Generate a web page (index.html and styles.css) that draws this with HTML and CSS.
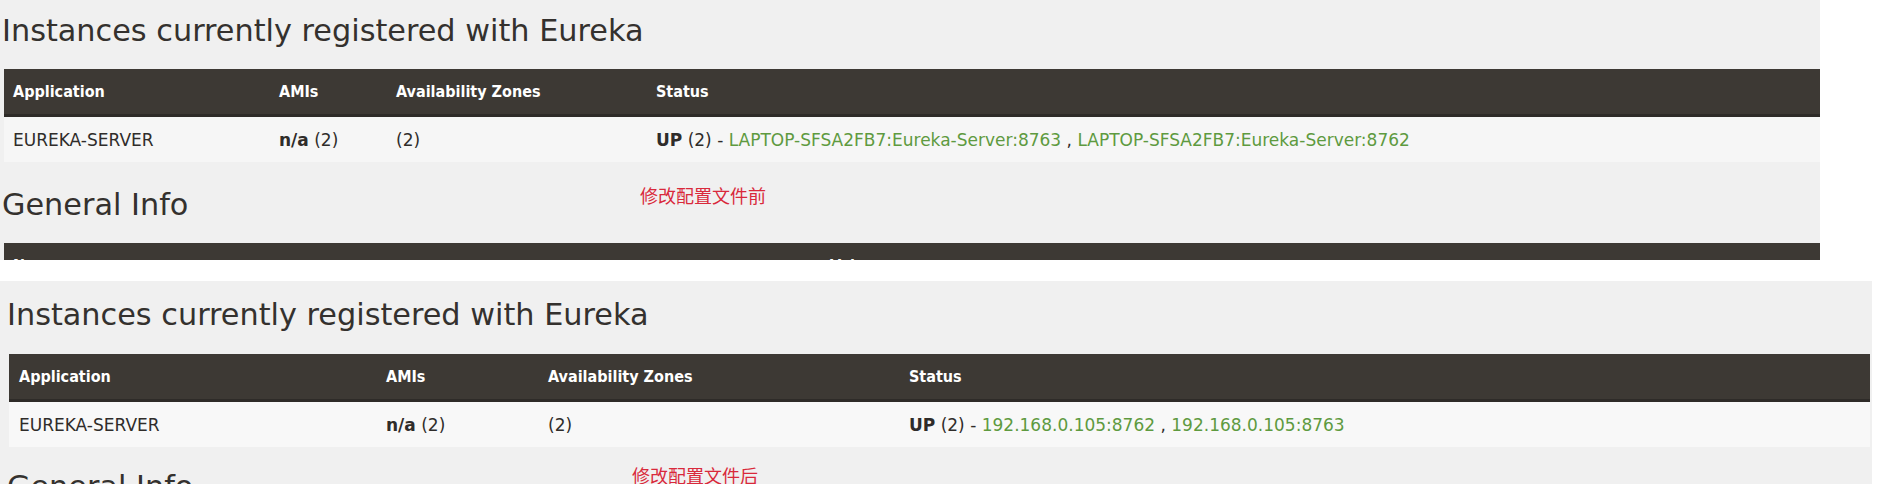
FILE: index.html
```html
<!DOCTYPE html>
<html lang="zh">
<head>
<meta charset="utf-8">
<title>Eureka</title>
<link rel="stylesheet" href="styles.css">
</head>
<body>
<section class="shot shot-before">
  <h1 class="title">Instances currently registered with Eureka</h1>
  <table class="grid grid-before">
    <colgroup><col class="c1"><col class="c2"><col class="c3"><col></colgroup>
    <thead>
      <tr><th>Application</th><th>AMIs</th><th>Availability Zones</th><th>Status</th></tr>
    </thead>
    <tbody>
      <tr>
        <td>EUREKA-SERVER</td>
        <td><b>n/a</b> (2)</td>
        <td>(2)</td>
        <td><b>UP</b> (2) - <a class="link">LAPTOP-SFSA2FB7:Eureka-Server:8763</a> , <a class="link">LAPTOP-SFSA2FB7:Eureka-Server:8762</a></td>
      </tr>
    </tbody>
  </table>
  <h1 class="title">General Info</h1>
  <table class="grid info">
    <colgroup><col class="i1"><col></colgroup>
    <thead><tr><th>Name</th><th>Value</th></tr></thead>
  </table>
  <p class="note note-before">修改配置文件前</p>
</section>

<section class="shot shot-after">
  <h1 class="title">Instances currently registered with Eureka</h1>
  <table class="grid grid-after">
    <colgroup><col class="c1"><col class="c2"><col class="c3"><col></colgroup>
    <thead>
      <tr><th>Application</th><th>AMIs</th><th>Availability Zones</th><th>Status</th></tr>
    </thead>
    <tbody>
      <tr>
        <td>EUREKA-SERVER</td>
        <td><b>n/a</b> (2)</td>
        <td>(2)</td>
        <td><b>UP</b> (2) - <a class="link">192.168.0.105:8762</a> , <a class="link">192.168.0.105:8763</a></td>
      </tr>
    </tbody>
  </table>
  <h1 class="title">General Info</h1>
  <table class="grid info">
    <colgroup><col class="i1"><col></colgroup>
    <thead><tr><th>Name</th><th>Value</th></tr></thead>
  </table>
  <p class="note note-after">修改配置文件后</p>
</section>
</body>
</html>
```
FILE: styles.css
```css
html, body {
  margin: 0;
  padding: 0;
  background: #ffffff;
}

body {
  font-family: "DejaVu Sans", "Noto Sans CJK SC", sans-serif;
  color: #34312e;
}

.shot {
  position: relative;
  background: #f0f0f0;
  overflow: hidden;
  box-sizing: border-box;
}

.shot-before {
  width: 1820px;
  height: 260px;
  padding: 13px 0 0 4px;
}

.shot-after {
  width: 1872px;
  height: 203px;
  margin-top: 21px;
  padding: 16px 2px 0 9px;
}

.title {
  margin: 0 0 20px -2px;
  font-size: 30.3px;
  line-height: 36px;
  font-weight: normal;
  color: #34312e;
  white-space: nowrap;
}

.shot-after .title {
  margin-bottom: 21px;
}

.grid {
  width: 100%;
  border-collapse: collapse;
  table-layout: fixed;
  margin-bottom: 25px;
}

.shot-after .grid {
  margin-bottom: 22px;
}

.grid th {
  height: 45px;
  background: #3d3934;
  border-bottom: 3px solid #2e2b28;
  color: #ffffff;
  text-align: left;
  vertical-align: middle;
  font-family: "DejaVu Sans Condensed", "DejaVu Sans", sans-serif;
  font-stretch: condensed;
  font-weight: bold;
  font-size: 16px;
  padding: 0 0 0 9px;
  white-space: nowrap;
}

.grid td {
  height: 45px;
  text-align: left;
  vertical-align: middle;
  font-size: 17px;
  padding: 0 0 0 9px;
  white-space: nowrap;
  color: #2f2c2a;
}

.grid-before td { background: #f6f6f6; }
.grid-after td { background: #f8f8f8; }

.grid-after th,
.grid-after td {
  padding-left: 10px;
}

.grid-before .c1 { width: 266px; }
.grid-before .c2 { width: 117px; }
.grid-before .c3 { width: 260px; }

.grid-after .c1 { width: 367px; }
.grid-after .c2 { width: 162px; }
.grid-after .c3 { width: 361px; }

.info .i1 { width: 817px; }

.grid td b {
  font-weight: bold;
}

.link {
  color: #5e9a40;
  text-decoration: none;
}

.note {
  position: absolute;
  margin: 0;
  font-family: "Noto Sans CJK SC", sans-serif;
  font-size: 18px;
  line-height: 18px;
  color: #d9293b;
  white-space: nowrap;
}

.note-before {
  left: 640px;
  top: 186px;
}

.note-after {
  left: 632px;
  top: 185px;
}
```
